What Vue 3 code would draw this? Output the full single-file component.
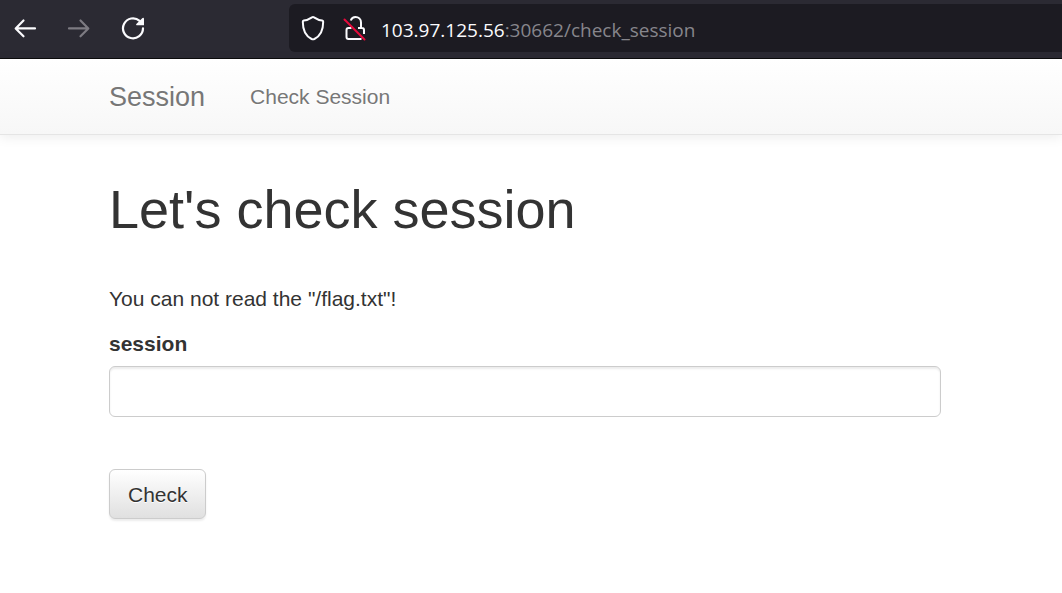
<script setup>
import { ref } from 'vue'

const session = ref('')
</script>

<template>
  <div class="window">
    <div class="toolbar">
      <div class="controls">
        <button type="button" aria-label="Back">
          <svg width="24" height="24" viewBox="0 0 24 24" fill="none" stroke="#fbfbfe" stroke-width="2.2" stroke-linecap="round" stroke-linejoin="round">
            <path d="M22 12.4H3M10.500 4.500L2.700 12.400L10.500 20.300" />
          </svg>
        </button>
        <button type="button" aria-label="Forward" disabled>
          <svg width="24" height="24" viewBox="0 0 24 24" fill="none" stroke="#7d7b82" stroke-width="2.2" stroke-linecap="round" stroke-linejoin="round">
            <path d="M2 12.4H21M13.500 4.500L21.300 12.400L13.500 20.300" />
          </svg>
        </button>
        <button type="button" aria-label="Reload">
          <svg width="24" height="24" viewBox="0 0 24 24" fill="none" stroke="#fbfbfe" stroke-width="2.2" stroke-linecap="round">
            <path d="M22 12.300A10 10 0 1 1 18.600 4.800" />
            <path d="M23 2.200V9.200H15.600Q14.700 8.900 15.300 8.100L21.500 2Q22.700 1.200 23 2.200Z" fill="#fbfbfe" stroke="none" />
          </svg>
        </button>
      </div>
      <div class="address">
        <div class="badges">
          <svg width="24" height="26" viewBox="0 0 24 26" fill="none" stroke="#fbfbfe" stroke-width="2" stroke-linejoin="round">
            <path d="M12 2Q12.500 2 13 2.300C15.600 4 18.500 5.200 21.200 5.600Q22.200 5.800 22.200 6.800C22.200 14.800 19.200 21.200 13.400 24Q12 24.600 10.600 24C4.800 21.200 1.800 14.800 1.800 6.800Q1.800 5.800 2.800 5.600C5.500 5.200 8.400 4 11 2.300Q11.500 2 12 2Z" />
          </svg>
          <svg width="24" height="26" viewBox="0 0 24 26" fill="none" stroke="#fbfbfe" stroke-width="2">
            <path d="M7.700 5.500C8.700 3 10.500 2 12.500 2C15.500 2 18 4.300 18 7.500V13H19Q21 13 21 15V19M15 13H18" />
            <path d="M8.500 13H5.500Q3.500 13 3.500 15V22Q3.500 24 5.500 24H18.500" />
            <path d="M1.500 4.500L21.500 24.500" stroke="#e80a3c" stroke-linecap="round" />
          </svg>
        </div>
        <span class="url"><b>103.97.125.56</b>:30662/check_session</span>
      </div>
    </div>

    <nav class="navbar">
      <a class="brand" href="#">Session</a>
      <a href="#">Check Session</a>
    </nav>

    <main>
      <h1>Let's check session</h1>
      <p>You can not read the "/flag.txt"!</p>
      <form @submit.prevent>
        <label for="session">session</label>
        <input id="session" v-model="session" type="text" autocomplete="off">
        <button type="submit">Check</button>
      </form>
    </main>
  </div>
</template>

<style>
body {
  margin: 0;
  background: #fff;
}
</style>

<style scoped>
.window {
  font: 21px/30px "Liberation Sans", Arial, sans-serif;
  color: #333;
}

.toolbar {
  display: flex;
  align-items: center;
  gap: 144px;
  box-sizing: border-box;
  height: 59px;
  padding: 0 0 2px 13px;
  background: #2b2a33;
  border-bottom: 1px solid #0c0c0d;
}

.controls {
  display: flex;
  gap: 30px;
}

.controls button {
  display: flex;
  padding: 0;
  border: 0;
  background: none;
}

.address {
  display: flex;
  flex: 1;
  align-items: center;
  gap: 14px;
  height: 48px;
  padding-left: 12px;
  border-radius: 6px 0 0 6px;
  background: #1c1b22;
}

.badges {
  display: flex;
  gap: 18px;
}

.url {
  padding-top: 3px;
  font-family: "Open Sans", "Noto Sans", sans-serif;
  font-size: 19px;
  color: #87868c;
}

.url b {
  font-weight: 400;
  color: #fbfbfe;
}

.navbar {
  display: flex;
  align-items: center;
  gap: 45px;
  height: 75px;
  padding: 0 109px;
  border-bottom: 1px solid #e5e5e5;
  background: linear-gradient(#fff, #f7f7f7);
  box-shadow: 0 2px 12px rgba(0, 0, 0, 0.08);
}

.navbar a {
  color: #777;
  text-decoration: none;
  text-shadow: 0 1px 0 #fff;
}

.navbar .brand {
  font-size: 27px;
}

main {
  padding: 44px 121px 45px 109px;
}

h1 {
  margin: 0 0 45px;
  font-size: 54px;
  line-height: 60px;
  font-weight: 400;
}

p {
  margin: 0 0 15px;
}

form {
  display: flex;
  flex-direction: column;
  align-items: flex-start;
}

label {
  margin-bottom: 7px;
  font-weight: 700;
}

input {
  box-sizing: border-box;
  width: 100%;
  height: 51px;
  margin: 0 0 52px;
  padding: 9px 18px;
  border: 1px solid #ccc;
  border-radius: 6px;
  background: #fff;
  box-shadow: inset 0 2px 2px rgba(0, 0, 0, 0.075);
  font: inherit;
  color: #555;
}

form button {
  padding: 10px 17px 8px 18px;
  border: 1px solid #ccc;
  border-radius: 6px;
  background: linear-gradient(#fff, #e0e0e0);
  box-shadow: inset 0 1px 0 rgba(255, 255, 255, 0.15), 0 2px 2px rgba(0, 0, 0, 0.075);
  font: inherit;
  color: #333;
  text-shadow: 0 1px 0 #fff;
}
</style>
